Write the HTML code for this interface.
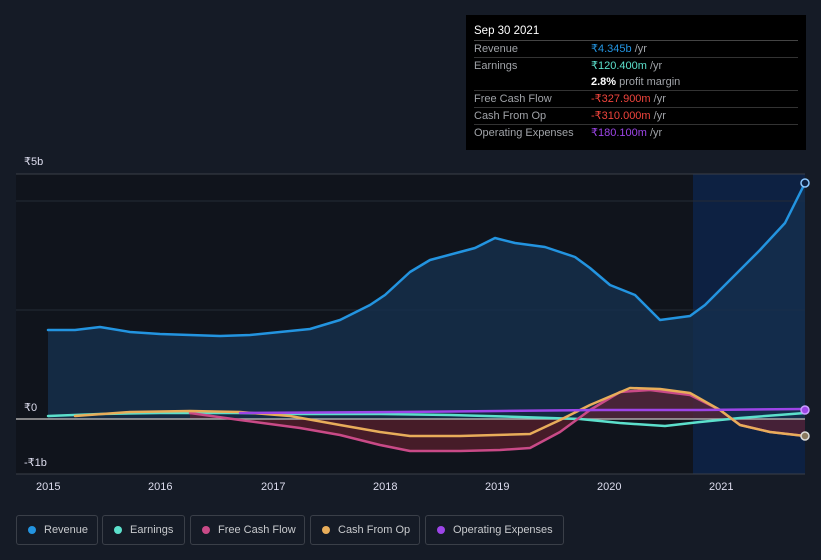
<!DOCTYPE html>
<html><head><meta charset="utf-8"><style>
body{margin:0;width:821px;height:560px;background:#151b26;font-family:"Liberation Sans",sans-serif;overflow:hidden;position:relative}
.tt{position:absolute;left:466px;top:15px;width:340px;height:135px;background:#000;box-sizing:border-box;padding:8px 8px 0 8px;font-size:11px;color:#a0a3a8}
.tt .h{color:#fff;font-size:11.5px;height:17px;line-height:17px;border-bottom:1px solid #444}
.r{display:flex;height:16px;line-height:16px;border-bottom:1px solid #333}
.r .l{width:117px}
.r.nb{border-bottom:none}
.leg{position:absolute;top:515px;height:30px;border:1px solid #3a3f48;border-radius:3px;box-sizing:border-box;color:#c8cacd;font-size:11px;line-height:28px;padding-left:27px}
.leg i{position:absolute;left:11px;top:10px;width:8px;height:8px;border-radius:50%}
.ax{position:absolute;color:#dde;font-size:11px}
</style></head><body>
<svg width="821" height="560" style="position:absolute;left:0;top:0">
<rect x="16" y="174" width="677" height="300" fill="#10141c"/>
<rect x="693" y="174" width="112" height="300" fill="#0d2142"/>
<line x1="16" y1="174" x2="805" y2="174" stroke="#3a3f48"/>
<line x1="16" y1="201" x2="805" y2="201" stroke="#252b36"/>
<line x1="16" y1="310" x2="805" y2="310" stroke="#252b36"/>
<line x1="16" y1="474" x2="805" y2="474" stroke="#3a3f48"/>
<polygon fill="#15304d" fill-opacity="0.8" points="48,419 48,330 75,330 100,327 130,332 160,334 190,335 220,336 250,335 280,332 310,329 340,320 370,305 385,295 410,272 430,260 460,252 475,248 495,238 515,243 545,247 575,257 590,268 610,285 635,295 660,320 690,316 705,305 720,290 740,270 760,250 785,223 805,183 805,419"/>
<polygon fill="#6b2230" fill-opacity="0.6" points="190,413 240,420 300,428 340,435 380,445 410,451 460,451 500,450 530,448 560,432 590,410 620,392 650,390 690,395 720,410 740,425 770,432 805,436 805,419 190,419"/>
<line x1="16" y1="419" x2="805" y2="419" stroke="#aaa" stroke-width="1.5"/>
<g fill="none" stroke-width="2.5" stroke-linejoin="round" stroke-linecap="round">
<polyline stroke="#2394e0" points="48,330 75,330 100,327 130,332 160,334 190,335 220,336 250,335 280,332 310,329 340,320 370,305 385,295 410,272 430,260 460,252 475,248 495,238 515,243 545,247 575,257 590,268 610,285 635,295 660,320 690,316 705,305 720,290 740,270 760,250 785,223 805,183"/>
<polyline stroke="#5ce0cc" points="48,416 100,414 160,413 240,413 300,414 380,414 450,415 520,417 580,419 620,423 665,426 700,422 740,418 805,413"/>
<polyline stroke="#c94a87" points="190,413 240,420 300,428 340,435 380,445 410,451 460,451 500,450 530,448 560,432 590,410 620,392 650,390 690,395 720,410 740,425 770,432 805,436"/>
<polyline stroke="#e8ad5a" points="75,416 130,412 190,411 240,412 290,416 340,425 380,432 410,436 460,436 530,434 560,420 590,405 630,388 660,389 690,393 720,410 740,425 770,432 805,436"/>
<polyline stroke="#9d45e8" points="240,413 400,412 500,411 600,410 700,410 805,409"/>
</g>
<circle cx="805" cy="183" r="4" fill="#0d2142" stroke="#8cc8ff" stroke-width="1.5"/>
<circle cx="805" cy="410" r="4" fill="#9d45e8" stroke="#c9a0ff" stroke-width="1.5"/>
<circle cx="805" cy="436" r="4" fill="#8a7a60" stroke="#ddd" stroke-width="1.5"/>
</svg>
<div class="ax" style="left:24px;top:155px">₹5b</div>
<div class="ax" style="left:24px;top:401px">₹0</div>
<div class="ax" style="left:24px;top:456px">-₹1b</div>
<div class="ax" style="left:36px;top:481px">2015</div>
<div class="ax" style="left:148px;top:481px">2016</div>
<div class="ax" style="left:261px;top:481px">2017</div>
<div class="ax" style="left:373px;top:481px">2018</div>
<div class="ax" style="left:485px;top:481px">2019</div>
<div class="ax" style="left:597px;top:481px">2020</div>
<div class="ax" style="left:709px;top:481px">2021</div>
<div class="tt">
<div class="h">Sep 30 2021</div>
<div class="r"><span class="l">Revenue</span><span><b style="color:#2394e0;font-weight:normal">₹4.345b</b> /yr</span></div>
<div class="r nb"><span class="l">Earnings</span><span><b style="color:#5ce0cc;font-weight:normal">₹120.400m</b> /yr</span></div>
<div class="r"><span class="l"></span><span><b style="color:#fff">2.8%</b> profit margin</span></div>
<div class="r"><span class="l">Free Cash Flow</span><span><b style="color:#f0443c;font-weight:normal">-₹327.900m</b> /yr</span></div>
<div class="r"><span class="l">Cash From Op</span><span><b style="color:#f0443c;font-weight:normal">-₹310.000m</b> /yr</span></div>
<div class="r nb"><span class="l">Operating Expenses</span><span><b style="color:#9d45e8;font-weight:normal">₹180.100m</b> /yr</span></div>
</div>
<div class="leg" style="left:16px;width:82px"><i style="background:#2394e0"></i>Revenue</div>
<div class="leg" style="left:102px;width:83px"><i style="background:#5ce0cc"></i>Earnings</div>
<div class="leg" style="left:190px;width:115px"><i style="background:#c94a87"></i>Free Cash Flow</div>
<div class="leg" style="left:310px;width:110px"><i style="background:#e8ad5a"></i>Cash From Op</div>
<div class="leg" style="left:425px;width:139px"><i style="background:#9d45e8"></i>Operating Expenses</div>
</body></html>
